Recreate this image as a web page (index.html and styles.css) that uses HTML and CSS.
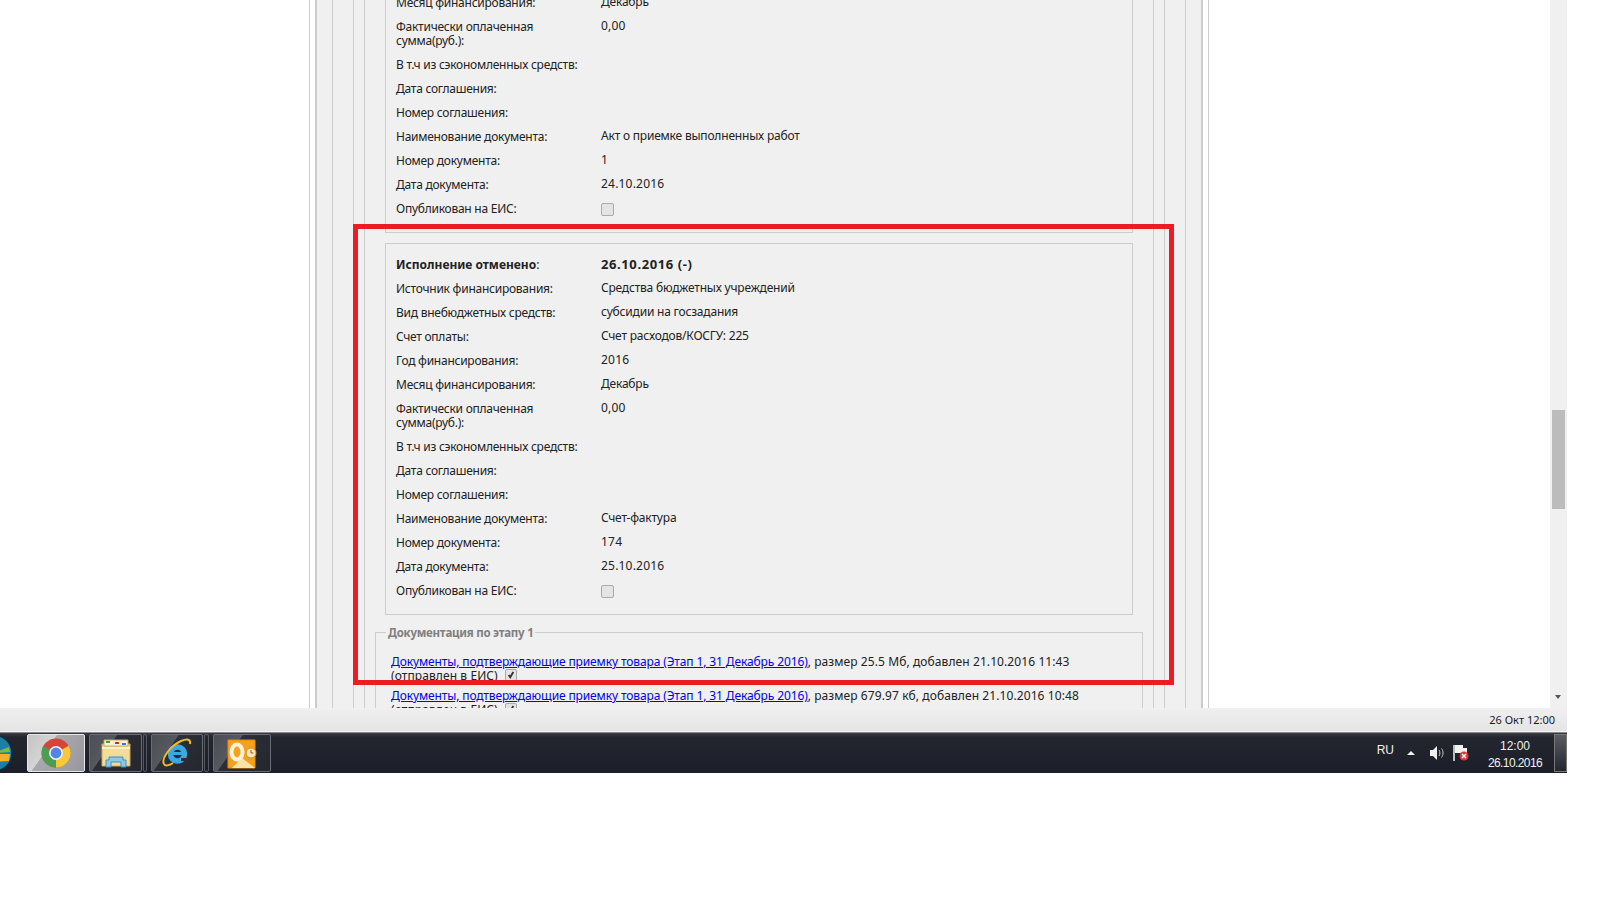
FILE: index.html
```html
<!DOCTYPE html>
<html lang="ru">
<head>
  <meta charset="UTF-8">
  <title>Исполнение</title>
  <link rel="stylesheet" href="styles.css">
</head>
<body>
  <div class="screen">
    <div class="browser">
      <div class="viewport">
        <div class="frame frame-1"><div class="frame frame-2"><div class="frame frame-3"><div class="frame frame-4"><div class="frame frame-5">

          <div class="block block-first">
            <div class="row"><div class="label">Месяц финансирования:</div><div class="value">Декабрь</div></div>
            <div class="row"><div class="label">Фактически оплаченная сумма(руб.):</div><div class="value num">0,00</div></div>
            <div class="row"><div class="label">В т.ч из сэкономленных средств:</div><div class="value"></div></div>
            <div class="row"><div class="label">Дата соглашения:</div><div class="value"></div></div>
            <div class="row"><div class="label">Номер соглашения:</div><div class="value"></div></div>
            <div class="row"><div class="label">Наименование документа:</div><div class="value">Акт о приемке выполненных работ</div></div>
            <div class="row"><div class="label">Номер документа:</div><div class="value num">1</div></div>
            <div class="row"><div class="label">Дата документа:</div><div class="value num">24.10.2016</div></div>
            <div class="row"><div class="label">Опубликован на ЕИС:</div><div class="value"><span class="check"></span></div></div>
          </div>

          <div class="block block-second">
            <div class="row"><div class="label"><b>Исполнение отменено</b>:</div><div class="value value-big">26.10.2016 (-)</div></div>
            <div class="row"><div class="label">Источник финансирования:</div><div class="value">Средства бюджетных учреждений</div></div>
            <div class="row"><div class="label">Вид внебюджетных средств:</div><div class="value">субсидии на госзадания</div></div>
            <div class="row"><div class="label">Счет оплаты:</div><div class="value">Счет расходов/КОСГУ: 225</div></div>
            <div class="row"><div class="label">Год финансирования:</div><div class="value num">2016</div></div>
            <div class="row"><div class="label">Месяц финансирования:</div><div class="value">Декабрь</div></div>
            <div class="row"><div class="label">Фактически оплаченная сумма(руб.):</div><div class="value num">0,00</div></div>
            <div class="row"><div class="label">В т.ч из сэкономленных средств:</div><div class="value"></div></div>
            <div class="row"><div class="label">Дата соглашения:</div><div class="value"></div></div>
            <div class="row"><div class="label">Номер соглашения:</div><div class="value"></div></div>
            <div class="row"><div class="label">Наименование документа:</div><div class="value">Счет-фактура</div></div>
            <div class="row"><div class="label">Номер документа:</div><div class="value num">174</div></div>
            <div class="row"><div class="label">Дата документа:</div><div class="value num">25.10.2016</div></div>
            <div class="row"><div class="label">Опубликован на ЕИС:</div><div class="value"><span class="check"></span></div></div>
          </div>

          <fieldset class="docs">
            <legend>Документация по этапу 1</legend>
            <div class="doc"><a href="#">Документы, подтверждающие приемку товара (Этап 1, 31 Декабрь 2016)</a>, размер 25.5 Мб, добавлен 21.10.2016 11:43 <br>(отправлен в ЕИС) <span class="check check-on"><svg viewBox="0 0 13 13"><path d="M3.500 6.500l2 3 4-7" fill="none" stroke="#333" stroke-width="2.400"/></svg></span></div>
            <div class="doc"><a href="#">Документы, подтверждающие приемку товара (Этап 1, 31 Декабрь 2016)</a>, размер 679.97 кб, добавлен 21.10.2016 10:48 <br>(отправлен в ЕИС) <span class="check check-on"><svg viewBox="0 0 13 13"><path d="M3.500 6.500l2 3 4-7" fill="none" stroke="#333" stroke-width="2.400"/></svg></span></div>
          </fieldset>

        </div></div></div></div></div>

        <div class="scrollbar">
          <div class="scroll-thumb"></div>
          <div class="scroll-arrow"></div>
        </div>
        <div class="highlight"></div>
      </div>
      <div class="statusbar">26 Окт 12:00</div>
    </div>

    <div class="taskbar">
      <svg class="orb" viewBox="0 0 13 40">
        <circle cx="-6" cy="20" r="18" fill="#1d7fa5" stroke="#0d2a40" stroke-width="1.500"/>
        <path d="M-6 20l15-6 1 5z" fill="#7fba3a"/>
        <path d="M-6 21h16l-1 7-15 1z" fill="#f2b32a"/>
      </svg>

      <div class="task task-active task-chrome">
        <svg width="30" height="30" viewBox="0 0 30 30">
          <circle cx="15" cy="15" r="14.500" fill="#d8443a"/>
          <path d="M15 15L27.600 7.700A14.500 14.500 0 0 1 15 29.500z" fill="#f7c83a"/>
          <path d="M15 15L15 29.500A14.500 14.500 0 0 1 2.400 7.800z" fill="#4b9d52"/>
          <circle cx="15" cy="15" r="7" fill="#f2f2f2"/>
          <circle cx="15" cy="15" r="5.400" fill="#4f86e8"/>
        </svg>
      </div>

      <div class="task task-explorer">
        <svg width="32" height="32" viewBox="0 0 32 32">
          <path d="M2 7h28v22H2z" fill="#f3dc97" stroke="#c9a85a"/>
          <path d="M4 3h24v6H4z" fill="#faf3d7" stroke="#c9a85a"/>
          <path d="M6 4h4v2H6z" fill="#3ca33c"/>
          <path d="M15 5h4v2h-4z" fill="#b8392c"/>
          <path d="M22 6h4v2h-4z" fill="#2f7fd0"/>
          <path d="M2 11h28" stroke="#fbf0c4" stroke-width="2"/>
          <path d="M6 30v-7h3v-3h14v3h3v7h-5v-5H11v5z" fill="#8cc8ea" stroke="#3d8fc4"/>
        </svg>
      </div>
      <div class="sliver"></div>

      <div class="task task-ie">
        <svg width="32" height="32" viewBox="0 0 32 32">
          <circle cx="16.500" cy="17" r="7" fill="none" stroke="#39a9e1" stroke-width="5.500"/>
          <path d="M9 16.500h15.500" stroke="#39a9e1" stroke-width="3"/>
          <path d="M20 21h7v3h-7z" fill="#2b2d36"/>
          <path d="M3 27C0 22 9 9 20 4c6-2.500 10-2 9 3" fill="none" stroke="#eebc2a" stroke-width="2"/>
          <path d="M3 27c1 2 5 2 9-1" fill="none" stroke="#eebc2a" stroke-width="2"/>
        </svg>
      </div>
      <div class="sliver sliver-2"></div>

      <div class="task task-outlook">
        <svg width="30" height="32" viewBox="0 0 30 32">
          <path d="M1 3h27v28H1z" fill="#f3a11e" stroke="#e58a10"/>
          <path d="M5 31l10-10 13 10z" fill="#fbe3a8"/>
          <ellipse cx="10" cy="15" rx="5.500" ry="7.500" fill="none" stroke="#fdf2d8" stroke-width="4"/>
          <circle cx="24" cy="16" r="5" fill="#fbe9c4" stroke="#d88b1a"/>
          <path d="M24 13v3h2.500" fill="none" stroke="#a55a10"/>
        </svg>
      </div>

      <div class="tray">
        <span class="lang">RU</span>
        <span class="tray-arrow"></span>
        <svg class="tray-icon" width="15" height="16" viewBox="0 0 15 16">
          <path d="M1 5h3l4-4v14l-4-4H1z" fill="#f0f0f0"/>
          <path d="M10 5c1.200 1.500 1.200 4.500 0 6M12.500 3.500c2 2.500 2 6.500 0 9" fill="none" stroke="#c8c8c8"/>
        </svg>
        <svg class="tray-icon tray-flag" width="16" height="18" viewBox="0 0 16 18">
          <path d="M1 1v16" stroke="#f2f2f2" stroke-width="1.500"/>
          <path d="M2 1h8v3h4v5H2z" fill="#f2f2f2"/>
          <circle cx="11" cy="12" r="4.500" fill="#e0353a"/>
          <path d="M9 10l4 4M13 10l-4 4" stroke="#fff" stroke-width="1.500"/>
        </svg>
        <div class="clock"><div>12:00</div><div class="clock-date">26.10.2016</div></div>
        <div class="show-desktop"></div>
      </div>
    </div>
  </div>
</body>
</html>
```

FILE: styles.css
```css
html, body {
  margin: 0;
  padding: 0;
  background: #fff;
}

body {
  font-family: "Noto Sans", Tahoma, sans-serif;
  font-size: 12px;
  color: #222;
}

.screen {
  width: 1567px;
  height: 773px;
  overflow: hidden;
}

.viewport {
  position: relative;
  height: 708px;
  overflow: hidden;
}

/* nested page frames */
.frame {
  border-left: 1px solid #ccc;
  border-right: 1px solid #ccc;
  background: #f0f0f0;
}

.frame-1 {
  width: 900px;
  box-sizing: border-box;
  margin: -16px 0 0 309px;
  padding: 0 5px;
  background: #fff;
}

.frame-2 {
  padding: 0 15px;
  border-left-width: 2px;
  border-right-width: 2px;
}

.frame-3 {
  padding: 0 20px;
}

.frame-4 {
  padding: 0 10px;
}

.block {
  margin: 0 20px 9px;
  padding: 7px 0 11px 10px;
  border: 1px solid #ccc;
}

.block-first {
  margin-bottom: 10px;
  border-top: 0;
}

.block-second {
  padding-top: 9px;
}

.row {
  display: flex;
  padding: 5px 0;
  line-height: 14px;
}

.label {
  width: 194px;
  margin-right: 11px;
  flex-shrink: 0;
  letter-spacing: -0.25px;
}

.label b {
  letter-spacing: 0;
}

.value {
  margin-top: -1px;
  letter-spacing: -0.2px;
}

.value.num {
  letter-spacing: 0.2px;
}

.value-big {
  font-size: 13px;
  font-weight: bold;
  letter-spacing: 0.6px;
}

.check {
  display: inline-block;
  width: 11px;
  height: 11px;
  margin-top: 2px;
  border: 1px solid #aaa;
  border-radius: 2px;
  background: #e4e4e4;
  vertical-align: top;
}

.check svg {
  display: block;
  width: 10px;
  height: 10px;
}

.check-on {
  width: 10px;
  height: 10px;
  margin: 0 0 0 4px;
}

.docs {
  margin: 0 10px;
  padding: 15px 15px 0;
  border: 1px solid #ccc;
  min-width: 0;
}

.docs legend {
  margin-left: -5px;
  padding: 2px 2px 0;
  color: #808080;
  font-size: 11.5px;
  font-weight: bold;
  letter-spacing: -0.25px;
  line-height: 14px;
}

.doc {
  padding-bottom: 6px;
  line-height: 14px;
  letter-spacing: 0.09px;
}

.doc a {
  color: #0000ee;
  letter-spacing: -0.12px;
}

.scrollbar {
  position: absolute;
  top: 0;
  right: 0;
  width: 17px;
  height: 708px;
  background: #f0f0f0;
}

.scroll-thumb {
  position: absolute;
  top: 410px;
  left: 2px;
  width: 13px;
  height: 99px;
  background: #bcbcbc;
}

.scroll-arrow {
  position: absolute;
  top: 695px;
  left: 5px;
  border-left: 3.5px solid transparent;
  border-right: 3.5px solid transparent;
  border-top: 4px solid #555;
}

.highlight {
  position: absolute;
  left: 353px;
  top: 224px;
  width: 811px;
  height: 451px;
  border: 5px solid #ed1c24;
}

.statusbar {
  height: 24px;
  padding-right: 12px;
  box-sizing: border-box;
  background: linear-gradient(#f0f0f0, #e4e4e4);
  border-bottom: 1px solid #f4f4f4;
  font-size: 11px;
  line-height: 24px;
  text-align: right;
  color: #1a1a2e;
}

/* windows taskbar */
.taskbar {
  display: flex;
  align-items: center;
  height: 41px;
  background: linear-gradient(#3a3d46 0, #23262f 10%, #1c1f29 100%);
  border-top: 1px solid #8a8a8a;
  box-sizing: border-box;
}

.orb {
  width: 13px;
  height: 40px;
  margin-right: 14px;
  flex-shrink: 0;
}

.task {
  display: flex;
  align-items: center;
  justify-content: center;
  height: 38px;
  box-sizing: border-box;
  border: 1px solid #6a6d74;
  border-radius: 2px;
  background: linear-gradient(125deg, #4c4e56 0, #56585f 35%, #2d2f38 36%, #25272f 100%);
  flex-shrink: 0;
}

.task-active {
  border-color: #e8e8e8;
  background: linear-gradient(125deg, #c4c4c4 0, #d4d4d4 35%, #a8a9ad 36%, #98999e 100%);
}

.task-chrome {
  width: 58px;
  margin-right: 4px;
}

.task-explorer {
  width: 53px;
  margin-right: 1px;
}

.task-ie {
  width: 52px;
  margin-right: 1px;
}

.task-outlook {
  width: 58px;
  margin-left: 4px;
}

.sliver {
  width: 4px;
  height: 38px;
  margin-right: 4px;
  box-sizing: border-box;
  border: 1px solid #55585f;
  border-radius: 2px;
}

.sliver-2 {
  width: 5px;
  margin-right: 0;
}

.tray {
  display: flex;
  align-items: center;
  margin-left: auto;
  height: 38px;
  color: #f0f0f0;
}

.lang {
  margin-right: 13px;
  font-family: "Liberation Sans", Arial, sans-serif;
  font-size: 12px;
  margin-top: -6px;
}

.tray-arrow {
  width: 0;
  height: 0;
  margin-right: 14px;
  border-left: 4px solid transparent;
  border-right: 4px solid transparent;
  border-bottom: 4px solid #f0f0f0;
}

.tray-icon {
  margin-right: 9px;
}

.tray-flag {
  margin-right: 17px;
}

.clock {
  width: 58px;
  margin-right: 10px;
  padding-top: 3px;
  text-align: center;
  font-family: "Liberation Sans", Arial, sans-serif;
  font-size: 12px;
  line-height: 17px;
}

.clock-date {
  letter-spacing: -0.6px;
}

.show-desktop {
  width: 13px;
  height: 38px;
  box-sizing: border-box;
  border: 1px solid #777;
  background: linear-gradient(#5a5c62, #25272f);
}
```
